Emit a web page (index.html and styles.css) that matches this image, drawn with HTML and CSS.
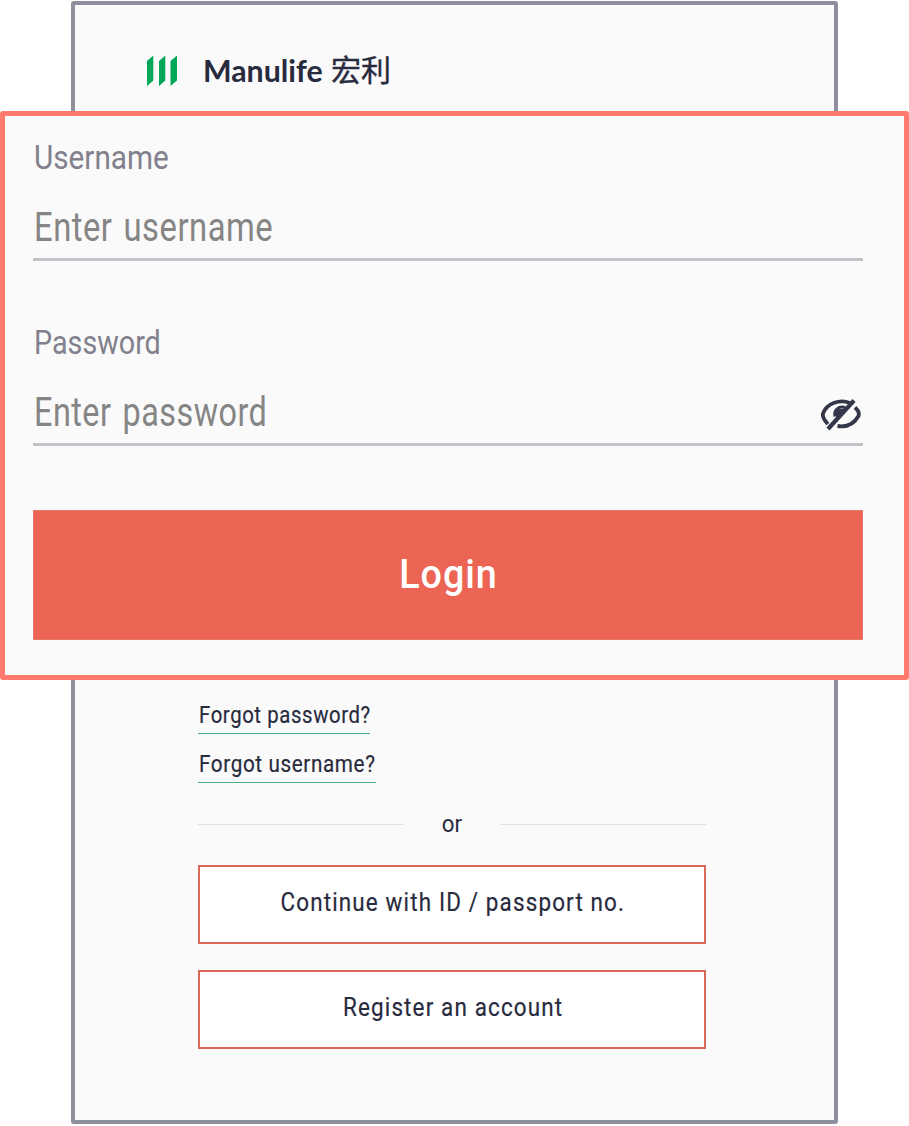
FILE: index.html
```html
<!DOCTYPE html>
<html lang="en">
<head>
<meta charset="utf-8">
<title>Manulife login</title>
<link rel="stylesheet" href="styles.css">
</head>
<body>
<main class="card">
  <header class="brand">
    <svg class="brand-mark" width="31" height="32" viewBox="0 0 31 32"><path fill="#00a758" d="M0 6 6.300 0.500v25L0 31zM12 6l6.300-5.500v25L12 31zM23.500 6l6.500-5.500v25L23.500 31z"/></svg>
    <span class="brand-name">Manulife</span>
    <span class="brand-cjk">宏利</span>
  </header>
  <section class="options">
    <a class="link link-password"><span class="text">Forgot password?</span></a>
    <a class="link link-username"><span class="text">Forgot username?</span></a>
    <div class="divider"><span class="text">or</span></div>
    <button class="outline continue"><span class="text">Continue with ID / passport no.</span></button>
    <button class="outline register"><span class="text">Register an account</span></button>
  </section>
</main>
<form class="login">
  <div class="field">
    <label class="label"><span class="text">Username</span></label>
    <div class="input"><span class="text">Enter username</span></div>
  </div>
  <div class="field field-password">
    <label class="label"><span class="text">Password</span></label>
    <div class="input"><span class="text">Enter password</span>
      <svg class="eye" width="40" height="34" viewBox="0 0 40 34" fill="none" stroke="#34374a" stroke-width="3.8"><path d="M7 26C3 22 1.500 18 2 15.500C6 5 19 1 29 5"/><path d="M34 9.500C37 12 38.500 15 37.500 18C33 26 26 29.500 16.500 28"/><path d="M7 31 33 2.500" stroke-width="4.200"/><path d="M24 9.500C18 7.500 12.500 12 14 18.500" stroke-width="3"/><path d="M15 11h9l-9 10z" fill="#34374a" stroke="none"/></svg>
    </div>
  </div>
  <button class="submit" type="button"><span class="text">Login</span></button>
</form>
</body>
</html>
```
FILE: styles.css
```css
* { box-sizing: border-box; }
body {
  margin: 0;
  position: relative;
  width: 909px;
  height: 1126px;
  overflow: hidden;
  background: #fff;
  color: #282b3e;
  font-family: Roboto, "Liberation Sans", sans-serif;
}
button { font-family: inherit; color: inherit; padding: 0; }
.text { display: inline-block; white-space: nowrap; }
.card {
  display: flex;
  flex-direction: column;
  justify-content: space-between;
  width: 767px;
  height: 1123px;
  margin: 1px 0 0 71px;
  border: 4px solid #8e8e9d;
  border-radius: 3px;
  background: #fafafa;
}
.brand {
  display: flex;
  align-items: center;
  height: 40px;
  margin: 45px 0 0 72px;
}
.brand-mark { margin-top: 2px; }
.brand-name {
  width: 128px;
  margin-left: 25px;
  font: 700 30.300px/40px Lato, sans-serif;
}
.brand-cjk {
  margin-top: -4px;
  font: 400 30px/40px "Noto Sans CJK TC", sans-serif;
  -webkit-text-stroke: 0.4px #282b3e;
}
.options {
  display: flex;
  flex-direction: column;
  align-items: flex-start;
  width: 508px;
  margin: 0 0 71px 123px;
}
.link {
  height: 34px;
  padding: 1px 0 0 1px;
  border-bottom: 1px solid #4fae87;
  font-size: 23.500px;
  line-height: 28px;
  letter-spacing: 0.7px;
  -webkit-text-stroke: 0.2px #282b3e;
}
.link .text { transform: scaleX(.865); transform-origin: left; }
.link-password { width: 172px; }
.link-username { width: 178px; margin-top: 15px; }
.link-username .text { transform: scaleX(.88); }
.divider {
  display: flex;
  align-items: center;
  justify-content: space-between;
  width: 100%;
  height: 30px;
  margin: 26px 0;
  font-size: 24px;
}
.divider .text { transform: scaleX(.93); }
.divider::before, .divider::after {
  content: "";
  width: 206px;
  height: 1px;
  background: #dfe0eb;
}
.outline {
  width: 100%;
  height: 79px;
  padding-bottom: 5px;
  border: 2px solid #db6858;
  background: #fff;
  font-size: 25.500px;
  letter-spacing: 1.300px;
  -webkit-text-stroke: 0.2px #282b3e;
}
.outline .text { transform: translateX(1px) scaleX(.88); }
.register { margin-top: 26px; }
.login {
  position: absolute;
  top: 111px;
  left: 0;
  width: 909px;
  height: 569px;
  padding: 23px 41px 0 28px;
  border: 5px solid #ff796c;
  border-radius: 3px;
  background: #fafafa;
}
.field { height: 122px; }
.field-password { margin-top: 63px; }
.label {
  display: block;
  height: 40px;
  padding-left: 1px;
  font-size: 33px;
  line-height: 38px;
  color: #82808d;
}
.input {
  display: flex;
  align-items: center;
  justify-content: space-between;
  height: 82px;
  padding: 19px 2px 0 1px;
  border-bottom: 3px solid #c2c2c9;
  font-size: 40px;
  line-height: 50px;
  letter-spacing: 0.6px;
  word-spacing: 3px;
  color: #858585;
}
.label .text, .input .text { transform-origin: left; }
.label .text { transform: scaleX(.9); }
.field-password .label .text { transform: scaleX(.87); }
.input .text { transform: scaleX(.82); }
.field-password .input .text { transform: scaleX(.81); }
.eye { margin-top: 3px; }
.submit {
  display: block;
  width: 830px;
  height: 130px;
  margin-top: 64px;
  padding-bottom: 3px;
  border: 1px solid #e47869;
  background: #ec6453;
  color: #fff;
  font-size: 41px;
  font-weight: 500;
  letter-spacing: 1px;
}
.submit .text { transform: scaleX(.92); }
```
